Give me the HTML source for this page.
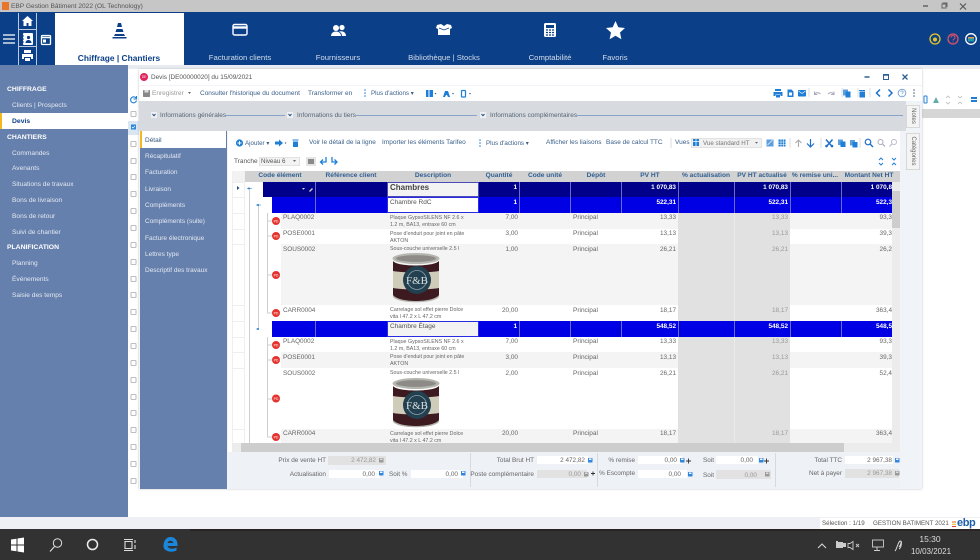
<!DOCTYPE html>
<html><head><meta charset="utf-8"><style>
html,body{margin:0;padding:0;width:980px;height:560px;overflow:hidden;background:#fff}
#w{position:absolute;left:0;top:0;width:980px;height:560px;overflow:hidden;filter:blur(.3px);font-family:"Liberation Sans",sans-serif;font-size:6.5px;color:#555}
.b{position:absolute}
.t{position:absolute;white-space:nowrap;line-height:8px;margin-top:1px}
.r{transform:translateX(-100%)}
.c{transform:translateX(-50%)}
.n{color:#d3dcea;font-size:7.7px;text-align:center;transform:translateX(-50%)}
.s{color:#e3e8f1;font-size:6.6px;left:12px}
.h{color:#fff;font-size:6.8px;font-weight:bold;left:7px}
.m{color:#e3e8f1;font-size:6.5px;left:145px}
.g{color:#2f5f93;font-weight:bold;font-size:6.6px;transform:translateX(-50%)}
.d{font-size:5.3px;line-height:6.6px;color:#666;left:390px}
.v{color:#666;transform:translateX(-100%);font-size:6.4px}
.q{color:#999;transform:translateX(-100%);font-size:6.4px}
.w{color:#fff;font-weight:bold;transform:translateX(-100%);font-size:6.4px}
.k{color:#666;left:283px;font-size:6.4px}
.i{background:#fff}.y{background:#e2e2e2}
</style></head><body><div id="w">
<div class="b" style="left:0;top:0;width:980px;height:12px;background:#c6c6c6"></div>
<div class="b" style="left:2px;top:2px;width:7px;height:8px;background:#e8752a"></div>
<div class="t" style="left:11px;top:2px;color:#555;font-size:6.6px">EBP Gestion Bâtiment 2022 (OL Technology)</div>
<div class="b" style="left:0;top:12px;width:980px;height:54px;background:#0b4088"></div>
<div class="b" style="left:55px;top:13px;width:129px;height:52px;background:#fff"></div>
<div class="b" style="left:18px;top:13px;width:1px;height:52px;background:#bccade"></div>
<div class="b" style="left:36px;top:13px;width:1px;height:52px;background:#bccade"></div>
<div class="b" style="left:19px;top:29px;width:17px;height:1px;background:#bccade"></div>
<div class="b" style="left:19px;top:46px;width:17px;height:1px;background:#bccade"></div>
<div class="t c" style="left:119px;top:53px;color:#0b4088;font-weight:bold;font-size:8.4px">Chiffrage | Chantiers</div>
<div class="t n" style="left:240px;top:53px">Facturation clients</div>
<div class="t n" style="left:338px;top:53px">Fournisseurs</div>
<div class="t n" style="left:444px;top:53px">Bibliothèque | Stocks</div>
<div class="t n" style="left:550px;top:53px">Comptabilité</div>
<div class="t n" style="left:615px;top:53px">Favoris</div>

<div class="b" style="left:0;top:65px;width:980px;height:4px;background:#e8ecf2"></div>
<div class="b" style="left:0;top:65px;width:128px;height:452px;background:#6680ad"></div>
<div class="b" style="left:0;top:113px;width:128px;height:16px;background:#fff"></div>
<div class="b" style="left:0;top:113px;width:2px;height:16px;background:#f5b71f"></div>
<div class="t h" style="top:85px">CHIFFRAGE</div>
<div class="t s" style="top:101px">Clients | Prospects</div>
<div class="t" style="left:12px;top:117px;color:#0b4088;font-weight:bold;font-size:6.8px">Devis</div>
<div class="t h" style="top:133px">CHANTIERS</div>
<div class="t s" style="top:149px">Commandes</div>
<div class="t s" style="top:164px">Avenants</div>
<div class="t s" style="top:180px">Situations de travaux</div>
<div class="t s" style="top:196px">Bons de livraison</div>
<div class="t s" style="top:212px">Bons de retour</div>
<div class="t s" style="top:228px">Suivi de chantier</div>
<div class="t h" style="top:243px">PLANIFICATION</div>
<div class="t s" style="top:259px">Planning</div>
<div class="t s" style="top:275px">Événements</div>
<div class="t s" style="top:291px">Saisie des temps</div>

<!-- background app -->
<div class="b" style="left:128px;top:94px;width:852px;height:13px;background:#fff"></div>
<div class="b" style="left:922px;top:109px;width:58px;height:9px;background:#d6d6d6"></div>
<div class="b" style="left:128px;top:121px;width:11px;height:14px;background:#dbe6f3"></div>

<!-- window -->
<div class="b" style="left:139px;top:69px;width:783px;height:420px;background:#f0f3f8;box-shadow:0 0 2px #bbb"></div>
<div class="b" style="left:139px;top:69px;width:783px;height:16px;background:#fff"></div>
<div class="b" style="left:139px;top:86px;width:783px;height:15px;background:#fff"></div>
<div class="b" style="left:139px;top:101px;width:767px;height:30px;background:#d7dade"></div>
<div class="t" style="left:151px;top:73px;color:#555;font-size:6.4px">Devis [DE00000020] du 15/09/2021</div>
<div class="t" style="left:152px;top:89px;color:#999">Enregistrer</div>
<div class="t" style="left:200px;top:89px;color:#3a5f8a">Consulter l'historique du document</div>
<div class="t" style="left:308px;top:89px;color:#3a5f8a">Transformer en</div>
<div class="t" style="left:371px;top:89px;color:#3a5f8a;font-size:6.2px">Plus d'actions ▾</div>
<div class="t" style="left:160px;top:111px;color:#567">Informations générales</div>
<div class="t" style="left:297px;top:111px;color:#567">Informations du tiers</div>
<div class="t" style="left:490px;top:111px;color:#567">Informations complémentaires</div>
<div class="b" style="left:225px;top:115px;width:60px;height:1px;background:#8aa4c8"></div>
<div class="b" style="left:356px;top:115px;width:121px;height:1px;background:#8aa4c8"></div>
<div class="b" style="left:575px;top:115px;width:328px;height:1px;background:#8aa4c8"></div>

<div class="b" style="left:140px;top:131px;width:87px;height:358px;background:#6680ad"></div>
<div class="b" style="left:140px;top:131px;width:86px;height:17px;background:#fff"></div>
<div class="b" style="left:140px;top:131px;width:2px;height:17px;background:#f5b71f"></div>
<div class="t" style="left:145px;top:136px;color:#35557f;font-size:6.5px">Détail</div>
<div class="t m" style="top:152px">Récapitulatif</div>
<div class="t m" style="top:168px">Facturation</div>
<div class="t m" style="top:185px">Livraison</div>
<div class="t m" style="top:201px">Compléments</div>
<div class="t m" style="top:217px">Compléments (suite)</div>
<div class="t m" style="top:234px">Facture électronique</div>
<div class="t m" style="top:250px">Lettres type</div>
<div class="t m" style="top:266px">Descriptif des travaux</div>

<div class="b" style="left:228px;top:131px;width:672px;height:321px;background:#fff"></div>
<div class="b" style="left:906px;top:105px;width:14px;height:23px;background:#f4f4f4;border:1px solid #d8d8d8;box-sizing:border-box"></div>
<div class="b" style="left:906px;top:133px;width:14px;height:37px;background:#f4f4f4;border:1px solid #d8d8d8;box-sizing:border-box"></div>
<div class="t" style="left:913px;top:115px;color:#666;font-size:6px;transform:translate(-50%,-50%) rotate(90deg)">Notes</div>
<div class="t" style="left:913px;top:150px;color:#666;font-size:6px;transform:translate(-50%,-50%) rotate(90deg)">Catégories</div>

<!-- grid toolbar -->
<div class="t" style="left:245px;top:139px;color:#3a5f8a;font-size:6.2px">Ajouter ▾</div>
<div class="t" style="left:309px;top:138px;color:#3a5f8a">Voir le détail de la ligne</div>
<div class="t" style="left:382px;top:138px;color:#3a5f8a">Importer les éléments Tarifeo</div>
<div class="t" style="left:486px;top:139px;color:#3a5f8a;font-size:6.2px">Plus d'actions ▾</div>
<div class="t" style="left:546px;top:138px;color:#3a5f8a">Afficher les liaisons</div>
<div class="t" style="left:606px;top:138px;color:#3a5f8a">Base de calcul TTC</div>
<div class="t" style="left:675px;top:138px;color:#3a5f8a">Vues</div>
<div class="b" style="left:691px;top:138px;width:71px;height:10px;background:#f1f1f1;border:1px solid #e2e2e2;box-sizing:border-box"></div>
<div class="t" style="left:703px;top:139px;color:#777;font-size:6.2px">Vue standard HT</div>
<div class="t" style="left:234px;top:157px;color:#555">Tranche</div>
<div class="b" style="left:259px;top:157px;width:41px;height:9px;background:#f3f3f3;border:1px solid #e2e2e2;box-sizing:border-box"></div>
<div class="t" style="left:261px;top:157px;color:#555;font-size:6.2px">Niveau 6</div>

<!-- grid header -->
<div class="b" style="left:232px;top:171px;width:12px;height:11px;background:#f2f2f2"></div>
<div class="b" style="left:244px;top:171px;width:656px;height:11px;background:#d2d2d2"></div>
<div class="t g" style="left:280px;top:171px">Code élément</div>
<div class="t g" style="left:351px;top:171px">Référence client</div>
<div class="t g" style="left:433px;top:171px">Description</div>
<div class="t g" style="left:499px;top:171px">Quantité</div>
<div class="t g" style="left:545px;top:171px">Code unité</div>
<div class="t g" style="left:596px;top:171px">Dépôt</div>
<div class="t g" style="left:650px;top:171px">PV HT</div>
<div class="t g" style="left:706px;top:171px">% actualisation</div>
<div class="t g" style="left:762px;top:171px">PV HT actualisé</div>
<div class="t g" style="left:815px;top:171px">% remise uni...</div>
<div class="t g" style="left:869px;top:171px">Montant Net HT</div>

<!-- stripes -->
<div class="b" style="left:281px;top:213px;width:611px;height:16px;background:#f4f4f4"></div>
<div class="b" style="left:281px;top:244px;width:611px;height:61px;background:#f4f4f4"></div>
<div class="b" style="left:281px;top:352px;width:611px;height:16px;background:#f4f4f4"></div>
<div class="b" style="left:281px;top:429px;width:611px;height:14px;background:#f4f4f4"></div>
<div class="b" style="left:678px;top:213px;width:112px;height:108px;background:#e1e1e1"></div>
<div class="b" style="left:678px;top:337px;width:112px;height:106px;background:#e1e1e1"></div>
<div class="b" style="left:734px;top:213px;width:1px;height:230px;background:#eaeaea"></div>
<!-- bands -->
<div class="b" style="left:263px;top:182px;width:629px;height:15px;background:#00008b"></div>
<div class="b" style="left:272px;top:197px;width:620px;height:16px;background:#0000e4"></div>
<div class="b" style="left:272px;top:321px;width:620px;height:16px;background:#0000e4"></div>
<!-- band column lines -->
<div class="b" style="left:315px;top:182px;width:1px;height:31px;background:#6a6ad0"></div>
<div class="b" style="left:519px;top:182px;width:1px;height:31px;background:#6a6ad0"></div>
<div class="b" style="left:570px;top:182px;width:1px;height:31px;background:#6a6ad0"></div>
<div class="b" style="left:621px;top:182px;width:1px;height:31px;background:#6a6ad0"></div>
<div class="b" style="left:678px;top:182px;width:1px;height:31px;background:#6a6ad0"></div>
<div class="b" style="left:734px;top:182px;width:1px;height:31px;background:#6a6ad0"></div>
<div class="b" style="left:790px;top:182px;width:1px;height:31px;background:#6a6ad0"></div>
<div class="b" style="left:841px;top:182px;width:1px;height:31px;background:#6a6ad0"></div>
<div class="b" style="left:315px;top:321px;width:1px;height:16px;background:#6a6ad0"></div>
<div class="b" style="left:519px;top:321px;width:1px;height:16px;background:#6a6ad0"></div>
<div class="b" style="left:570px;top:321px;width:1px;height:16px;background:#6a6ad0"></div>
<div class="b" style="left:621px;top:321px;width:1px;height:16px;background:#6a6ad0"></div>
<div class="b" style="left:678px;top:321px;width:1px;height:16px;background:#6a6ad0"></div>
<div class="b" style="left:734px;top:321px;width:1px;height:16px;background:#6a6ad0"></div>
<div class="b" style="left:790px;top:321px;width:1px;height:16px;background:#6a6ad0"></div>
<div class="b" style="left:841px;top:321px;width:1px;height:16px;background:#6a6ad0"></div>
<!-- description cells -->
<div class="b" style="left:387px;top:182px;width:92px;height:15px;background:#f3f3f3;border:1px solid #4a4ab8;box-sizing:border-box"></div>
<div class="b" style="left:387px;top:197px;width:92px;height:16px;background:#fff;border:1px solid #2a2ae0;box-sizing:border-box"></div>
<div class="b" style="left:387px;top:321px;width:92px;height:16px;background:#f3f3f3;border:1px solid #2a2ae0;box-sizing:border-box"></div>
<div class="t" style="left:390px;top:183px;color:#444;font-weight:bold;font-size:8px">Chambres</div>
<div class="t" style="left:390px;top:198px;color:#555;font-size:6.5px">Chambre RdC</div>
<div class="t" style="left:390px;top:322px;color:#555;font-size:6.5px">Chambre Étage</div>
<!-- band values -->
<div class="t w" style="left:517px;top:183px">1</div><div class="t w" style="left:676px;top:183px">1 070,83</div><div class="t w" style="left:788px;top:183px">1 070,83</div><div class="t w" style="left:892px;top:183px">1 070,8</div>
<div class="t w" style="left:517px;top:198px">1</div><div class="t w" style="left:676px;top:198px">522,31</div><div class="t w" style="left:788px;top:198px">522,31</div><div class="t w" style="left:892px;top:198px">522,3</div>
<div class="t w" style="left:517px;top:322px">1</div><div class="t w" style="left:676px;top:322px">548,52</div><div class="t w" style="left:788px;top:322px">548,52</div><div class="t w" style="left:892px;top:322px">548,5</div>

<!-- rows -->
<div class="t k" style="top:213px">PLAQ0002</div><div class="t d" style="top:214px">Plaque GypsoSILENS NF 2.6 x<br>1.2 m, BA13, entraxe 60 cm</div><div class="t v" style="left:518px;top:213px">7,00</div><div class="t" style="left:573px;top:213px;color:#666">Principal</div><div class="t v" style="left:676px;top:213px">13,33</div><div class="t q" style="left:788px;top:213px">13,33</div><div class="t v" style="left:892px;top:213px">93,3</div>
<div class="t k" style="top:229px">POSE0001</div><div class="t d" style="top:230px">Pose d'enduit pour joint en pâte<br>AKTON</div><div class="t v" style="left:518px;top:229px">3,00</div><div class="t" style="left:573px;top:229px;color:#666">Principal</div><div class="t v" style="left:676px;top:229px">13,13</div><div class="t q" style="left:788px;top:229px">13,13</div><div class="t v" style="left:892px;top:229px">39,3</div>
<div class="t k" style="top:245px">SOUS0002</div><div class="t d" style="top:245px">Sous-couche universelle 2.5 l</div><div class="t v" style="left:518px;top:245px">1,00</div><div class="t" style="left:573px;top:245px;color:#666">Principal</div><div class="t v" style="left:676px;top:245px">26,21</div><div class="t q" style="left:788px;top:245px">26,21</div><div class="t v" style="left:892px;top:245px">26,2</div>
<div class="t k" style="top:306px">CARR0004</div><div class="t d" style="top:306px">Carrelage sol effet pierre Dolce<br>vita l 47.2 x L 47.2 cm</div><div class="t v" style="left:518px;top:306px">20,00</div><div class="t" style="left:573px;top:306px;color:#666">Principal</div><div class="t v" style="left:676px;top:306px">18,17</div><div class="t q" style="left:788px;top:306px">18,17</div><div class="t v" style="left:892px;top:306px">363,4</div>
<div class="t k" style="top:337px">PLAQ0002</div><div class="t d" style="top:338px">Plaque GypsoSILENS NF 2.6 x<br>1.2 m, BA13, entraxe 60 cm</div><div class="t v" style="left:518px;top:337px">7,00</div><div class="t" style="left:573px;top:337px;color:#666">Principal</div><div class="t v" style="left:676px;top:337px">13,33</div><div class="t q" style="left:788px;top:337px">13,33</div><div class="t v" style="left:892px;top:337px">93,3</div>
<div class="t k" style="top:353px">POSE0001</div><div class="t d" style="top:353px">Pose d'enduit pour joint en pâte<br>AKTON</div><div class="t v" style="left:518px;top:353px">3,00</div><div class="t" style="left:573px;top:353px;color:#666">Principal</div><div class="t v" style="left:676px;top:353px">13,13</div><div class="t q" style="left:788px;top:353px">13,13</div><div class="t v" style="left:892px;top:353px">39,3</div>
<div class="t k" style="top:369px">SOUS0002</div><div class="t d" style="top:369px">Sous-couche universelle 2.5 l</div><div class="t v" style="left:518px;top:369px">2,00</div><div class="t" style="left:573px;top:369px;color:#666">Principal</div><div class="t v" style="left:676px;top:369px">26,21</div><div class="t q" style="left:788px;top:369px">26,21</div><div class="t v" style="left:892px;top:369px">52,4</div>
<div class="t k" style="top:429px">CARR0004</div><div class="t d" style="top:430px">Carrelage sol effet pierre Dolce<br>vita l 47.2 x L 47.2 cm</div><div class="t v" style="left:518px;top:429px">20,00</div><div class="t" style="left:573px;top:429px;color:#666">Principal</div><div class="t v" style="left:676px;top:429px">18,17</div><div class="t q" style="left:788px;top:429px">18,17</div><div class="t v" style="left:892px;top:429px">363,4</div>

<!-- scrollbars -->
<div class="b" style="left:892px;top:182px;width:8px;height:261px;background:#ececec"></div>
<div class="b" style="left:892px;top:191px;width:8px;height:37px;background:#cdcdcd"></div>
<div class="b" style="left:232px;top:443px;width:668px;height:9px;background:#ececec"></div>
<div class="b" style="left:241px;top:443px;width:603px;height:9px;background:#cdcdcd"></div>

<!-- footer -->
<div class="b" style="left:228px;top:452px;width:672px;height:37px;background:#eef1f6"></div>
<div class="b" style="left:470px;top:453px;width:1px;height:34px;background:#d6d9de"></div>
<div class="b" style="left:597px;top:453px;width:1px;height:34px;background:#d6d9de"></div>
<div class="b" style="left:775px;top:453px;width:1px;height:34px;background:#d6d9de"></div>
<div class="b y" style="left:328px;top:456px;width:58px;height:9px"></div>
<div class="b i" style="left:329px;top:470px;width:51px;height:8px"></div>
<div class="b i" style="left:411px;top:470px;width:52px;height:8px"></div>
<div class="b i" style="left:537px;top:456px;width:51px;height:8px"></div>
<div class="b y" style="left:537px;top:470px;width:50px;height:8px"></div>
<div class="b i" style="left:638px;top:456px;width:44px;height:8px"></div>
<div class="b i" style="left:638px;top:470px;width:49px;height:8px"></div>
<div class="b i" style="left:716px;top:456px;width:42px;height:8px"></div>
<div class="b y" style="left:716px;top:470px;width:55px;height:9px"></div>
<div class="b i" style="left:845px;top:456px;width:48px;height:8px"></div>
<div class="b y" style="left:845px;top:469px;width:54px;height:9px"></div>
<div class="t v" style="left:326px;top:456px">Prix de vente HT</div>
<div class="t v" style="left:326px;top:470px">Actualisation</div>
<div class="t" style="left:389px;top:470px;color:#666;font-size:6.4px">Soit %</div>
<div class="t v" style="left:534px;top:456px">Total Brut HT</div>
<div class="t v" style="left:534px;top:470px">Poste complémentaire</div>
<div class="t v" style="left:635px;top:456px">% remise</div>
<div class="t v" style="left:635px;top:469px">% Escompte</div>
<div class="t" style="left:703px;top:456px;color:#666;font-size:6.4px">Soit</div>
<div class="t" style="left:703px;top:471px;color:#666;font-size:6.4px">Soit</div>
<div class="t v" style="left:842px;top:456px">Total TTC</div>
<div class="t v" style="left:842px;top:469px">Net à payer</div>
<div class="t q" style="left:376px;top:456px">2 472,82</div>
<div class="t v" style="left:375px;top:470px">0,00</div>
<div class="t v" style="left:458px;top:470px">0,00</div>
<div class="t v" style="left:585px;top:456px">2 472,82</div>
<div class="t q" style="left:581px;top:470px">0,00</div>
<div class="t v" style="left:677px;top:456px">0,00</div>
<div class="t v" style="left:681px;top:470px">0,00</div>
<div class="t v" style="left:753px;top:456px">0,00</div>
<div class="t q" style="left:757px;top:471px">0,00</div>
<div class="t v" style="left:892px;top:456px">2 967,38</div>
<div class="t q" style="left:892px;top:469px">2 967,38</div>

<!-- bottom -->
<div class="b" style="left:128px;top:517px;width:852px;height:1px;background:#dcdfe4"></div>
<div class="b" style="left:0;top:517px;width:980px;height:12px;background:#eef0f5"></div>
<div class="b" style="left:820px;top:518px;width:160px;height:11px;background:#fff"></div>
<div class="t" style="left:822px;top:519px;color:#555;font-size:6.2px">Sélection : 1/19</div>
<div class="t" style="left:873px;top:519px;color:#555;font-size:6.2px">GESTION BATIMENT 2021</div>
<div class="t" style="left:957px;top:518px;color:#1d5fa8;font-weight:bold;font-size:11px;letter-spacing:-.4px">ebp</div>
<div class="b" style="left:0;top:529px;width:980px;height:31px;background:#333232"></div>
<div class="b" style="left:190px;top:529px;width:790px;height:2px;background:#2a2522"></div>
<div class="t c" style="left:930px;top:533px;color:#ddd;font-size:8.5px;line-height:10px">15:30</div>
<div class="t c" style="left:931px;top:546px;color:#ddd;font-size:8px;line-height:10px">10/03/2021</div>

<svg class="b" style="left:0;top:0" width="980" height="560" viewBox="0 0 980 560" fill="none">
<!-- title controls -->
<path d="M923 6h5" stroke="#555" stroke-width="1.3"/><path d="M942 4h4v4h-4zM943 4v-1h4v4" stroke="#666"/><path d="M960 3.500l6 6M966 3.500l-6 6" stroke="#555" stroke-width="1.1"/>
<!-- hamburger & left buttons -->
<path d="M3 35h12M3 39h12M3 43h12" stroke="#fff" stroke-width="1.3"/>
<path d="M27.500 16l-5.500 5h1.500v5h3v-3h2v3h3v-5h1.500z" fill="#fff"/>
<rect x="23" y="33" width="10" height="12" rx="1" fill="#fff"/><path d="M23 36h1M23 39h1M23 42h1" stroke="#0b4088"/><circle cx="28.500" cy="37.500" r="1.600" fill="#0b4088"/><path d="M25.500 43c0-4 6-4 6 0z" fill="#0b4088"/>
<rect x="41.500" y="35.500" width="9" height="9" rx="1" stroke="#fff" stroke-width="1.300"/><path d="M41 37.500h10" stroke="#fff" stroke-width="1.500"/><rect x="43" y="39.500" width="3" height="3" fill="#fff"/>
<path d="M24 50h7v3h-7z" fill="#fff"/><path d="M22 54h11v5h-2v-2h-7v2h-2z" fill="#fff"/><path d="M25 58h5v3h-5z" fill="#fff"/>
<!-- cone -->
<path d="M118 23h3l1 4h-5zM116.500 29h6l1 3h-8zM115 34h9l1 2h-11zM112.500 37h14v1.500h-14z" fill="#0b4088"/>
<!-- card -->
<rect x="233" y="24.500" width="14" height="10.500" rx="1.500" stroke="#fff" stroke-width="1.400"/><path d="M233 27.500h14" stroke="#fff" stroke-width="2.400"/>
<!-- people -->
<circle cx="336" cy="28" r="3" fill="#fff"/><circle cx="342" cy="27.500" r="2.600" fill="#fff"/><path d="M331 36c0-6 10-6 10 0z" fill="#fff"/><path d="M339 31.500c4-1 7 1 7 4.500h-4c0-2-1-3.500-3-4.500z" fill="#fff"/>
<!-- box -->
<path d="M437 25l4-1 3 2 3-2 4 1 1 3-2 1v6h-12v-6l-2-1z" fill="#fff"/><path d="M439 28l5 2 5-2" stroke="#0b4088" stroke-width=".8"/>
<!-- calc -->
<rect x="544" y="23" width="12" height="14" rx="1.500" fill="#fff"/><rect x="546" y="25" width="8" height="3" fill="#0b4088"/><path d="M546 30h2M549 30h2M552 30h2M546 32.500h2M549 32.500h2M552 32.500h2M546 35h2M549 35h2M552 35h2" stroke="#0b4088" stroke-width="1.200"/>
<!-- star -->
<path d="M615.500 21l2.800 6.300 6.700.7-5 4.500 1.400 6.800-5.900-3.500-5.900 3.500 1.400-6.800-5-4.500 6.700-.7z" fill="#fff"/>
<!-- top-right circles -->
<circle cx="935" cy="39" r="5" stroke="#e8c428" stroke-width="1.300"/><circle cx="935" cy="39.500" r="2" fill="#e8c428"/>
<circle cx="953" cy="39" r="5" stroke="#e0506a" stroke-width="1.300"/><path d="M951 37.500c0-2.500 4-2.500 4 0 0 1.500-2 1.500-2 3M953 41.800v.8" stroke="#e0506a"/>
<circle cx="971" cy="39" r="5.300" stroke="#fff" stroke-width="1.300"/><path d="M968 37h6v1.500h-6z" fill="#d95"/><path d="M968 38.500h6v3h-6z" fill="#29a"/>
<!-- window header -->
<circle cx="144" cy="77" r="4" fill="#e0245e"/>
<text x="144" y="78.200" fill="#fff" font-family="Liberation Sans" font-size="3.200" text-anchor="middle">DE</text>
<path d="M864.500 77h5" stroke="#2f5f93" stroke-width="1.500"/><rect x="883.500" y="74.500" width="5" height="5" stroke="#2f5f93" stroke-width="1"/><path d="M883.500 75h5" stroke="#2f5f93" stroke-width="1.500"/><path d="M902.500 74.500l5 5M907.500 74.500l-5 5" stroke="#2f5f93" stroke-width="1.300"/>
<!-- save -->
<rect x="143" y="90" width="7" height="7" rx=".8" fill="#888"/><rect x="144.500" y="90" width="4" height="2.500" fill="#ddd"/>
<path d="M188 92h3l-1.500 2z" fill="#667"/>
<path d="M365 90v.01M365 93v.01M365 96v.01" stroke="#2a82d8" stroke-width="1.600" stroke-linecap="round"/>
<path d="M426 90h7v7h-7z" fill="#1f7fd6"/><path d="M429 90v7" stroke="#fff"/><path d="M434.500 93h2l-1 1.500z" fill="#357"/>
<path d="M443 97l2-6h3l2 6h-2l-1-2h-1l-1 2z" fill="#1f7fd6"/><path d="M452 93h2l-1 1.500z" fill="#357"/>
<rect x="461.500" y="90.500" width="4" height="6.500" rx=".8" stroke="#1f7fd6" stroke-width="1.200"/><path d="M469 93h2l-1 1.500z" fill="#357"/>
<!-- window right toolbar -->
<path d="M775 91h6v-2h-6z" fill="#1f7fd6"/><path d="M773.500 92h9v4h-2v-1.500h-5v1.500h-2z" fill="#1f7fd6"/><path d="M776 95h4v2.500h-4z" fill="#1f7fd6"/>
<path d="M787.500 89.500h4l2 2v5.500h-6z" fill="#1f7fd6"/><rect x="789" y="92.500" width="3" height="3" fill="#fff"/>
<rect x="798" y="90" width="8" height="6.500" rx=".6" fill="#1f7fd6"/><path d="M798.500 91l3.500 2.500 3.500-2.500" stroke="#fff" stroke-width=".7"/>
<path d="M814.500 95c1-3 4-3 6-1M814.500 91.500v3h3" stroke="#aab" stroke-width="1"/><path d="M834 95c-1-3-4-3-6-1M834 91.500v3h-3" stroke="#aab" stroke-width="1"/>
<path d="M809 88v9M842 88v9M858 88v9M870 88v9" stroke="#ddd"/>
<rect x="843" y="89.500" width="5" height="6" fill="#5c9fdf"/><rect x="845.500" y="91.500" width="5" height="6" fill="#1f7fd6"/>
<path d="M859 90h6v1h-6z" fill="#1f7fd6"/><path d="M859.500 91.500h5.500v6h-5.500z" fill="#1f7fd6"/>
<path d="M880 89.500l-3.500 3.500 3.500 3.500M888.500 89.500l3.500 3.500-3.500 3.500" stroke="#1f70c8" stroke-width="1.500"/>
<circle cx="902" cy="93" r="3.800" stroke="#7aa5d0"/><path d="M900.800 92c0-1.500 2.400-1.500 2.400 0 0 1-1.200 1-1.200 2M902 95v.5" stroke="#7aa5d0" stroke-width=".8"/>
<path d="M914 90v.01M914 93v.01M914 96v.01" stroke="#456" stroke-width="1.500" stroke-linecap="round"/>
<!-- behind window -->
<path d="M136 98a3 3 0 1 0 .5 2.500M136.500 96v3h-3" stroke="#1f7fd6" stroke-width="1.100"/>
<rect x="924" y="96" width="3" height="7" rx=".6" stroke="#1f7fd6"/><path d="M933 103l3-6 3 6z" fill="#6aa"/><path d="M946 98l2-2 2 2M946 102l2 2 2-2M958 96l2 2 2-2M958 104l2-2 2 2" stroke="#bbb" stroke-width=".8"/><path d="M971 97h6v2h-6zM971 100h6v2h-6z" fill="#1f7fd6"/>
<!-- section chevrons -->
<rect x="151" y="112" width="6" height="6" fill="#eef0f3"/><path d="M152.500 114l1.500 1.700 1.500-1.700" stroke="#26507f" stroke-width="1"/>
<rect x="287" y="112" width="6" height="6" fill="#eef0f3"/><path d="M288.500 114l1.500 1.700 1.500-1.700" stroke="#26507f" stroke-width="1"/>
<rect x="480" y="112" width="6" height="6" fill="#eef0f3"/><path d="M481.500 114l1.500 1.700 1.500-1.700" stroke="#26507f" stroke-width="1"/>
<!-- grid toolbar icons -->
<circle cx="239.500" cy="143" r="3.600" fill="#1f7fd6"/><path d="M237.500 143h4M239.500 141v4" stroke="#fff" stroke-width=".9"/>
<path d="M275 141.500h4v-2l4 3.500-4 3.500v-2h-4z" fill="#1f7fd6"/><path d="M284.500 142.500h2l-1 1.500z" fill="#357"/>
<path d="M292.500 139.500h6v1h-6z" fill="#1f7fd6"/><path d="M293 141.500h5v5.500h-5z" fill="#1f7fd6"/>
<path d="M480 140v.01M480 143v.01M480 146v.01" stroke="#2a82d8" stroke-width="1.600" stroke-linecap="round"/>
<path d="M671 138v10M790 138v10M821 138v10M860 138v10" stroke="#ddd"/>
<rect x="693" y="139" width="6" height="7" fill="#1f7fd6"/><path d="M693 141.500h6M696 139v7" stroke="#fff" stroke-width=".7"/><path d="M755 142h3l-1.500 1.800z" fill="#667"/>
<rect x="766.500" y="139.500" width="7" height="7" fill="#5c9fdf"/><rect x="778.500" y="139.500" width="7" height="7" fill="#1f7fd6"/><path d="M778.500 142h7M778.500 144.500h7M781 139.500v7M783.500 139.500v7" stroke="#fff" stroke-width=".6"/><path d="M767.500 145l5-5" stroke="#fff" stroke-width=".6"/>
<path d="M798.500 147v-7M795.500 143l3-3 3 3" stroke="#aaa" stroke-width="1.100"/><path d="M810.500 139v7.500M807 143.500l3.500 3.500 3.500-3.500" stroke="#1f70c8" stroke-width="1.200"/>
<path d="M826 139.500l6.500 7.500M832.500 139.500l-6.500 7.500" stroke="#1f70c8" stroke-width="1.500"/><circle cx="826.500" cy="146" r="1.300" fill="#1f70c8"/><circle cx="832" cy="146" r="1.300" fill="#1f70c8"/>
<rect x="838" y="139.500" width="5" height="5.500" fill="#5c9fdf"/><rect x="840.500" y="141.500" width="5" height="5.500" fill="#1f7fd6"/>
<rect x="850" y="140" width="5" height="5.500" fill="#5c9fdf"/><rect x="852.500" y="142" width="5" height="5.500" fill="#1f7fd6"/>
<circle cx="868" cy="142" r="2.800" stroke="#1f70c8" stroke-width="1.200"/><path d="M870 144l3 3" stroke="#1f70c8" stroke-width="1.400"/>
<circle cx="880.500" cy="142" r="2.500" stroke="#aab" stroke-width="1"/><path d="M882.500 144l2.500 2.500" stroke="#aab" stroke-width="1.200"/>
<circle cx="894" cy="142" r="2.500" stroke="#bbc" stroke-width="1"/><path d="M892 144l-2.500 2.500" stroke="#bbc" stroke-width="1.200"/>
<!-- tranche -->
<path d="M293 160h3l-1.500 2z" fill="#667"/>
<rect x="306" y="157" width="10" height="9" fill="#e4e4e4"/><rect x="308" y="159" width="6" height="5" fill="#8a8a8a"/>
<path d="M326 157v5h-5M323 159.500l-2.500 2.500 2.500 2.500" stroke="#1f7fd6" stroke-width="1.300"/><path d="M332 157v5h5M334.500 159.500l2.500 2.500-2.500 2.500" stroke="#1f7fd6" stroke-width="1.300"/>
<path d="M879 160l2-2 2 2M879 163l2 2 2-2M892 158l2 2 2-2M892 165l2-2 2 2" stroke="#1f7fd6" stroke-width="1"/>
<!-- tree & row gutter -->
<path d="M232 197.500h12M232 213.500h12M232 229.500h12M232 244.500h12M232 305.500h12M232 321.500h12M232 337.500h12M232 352.500h12M232 368.500h12M232 429.500h12M232 182.500h12M244.500 171v272M232.500 171v272" stroke="#efefef"/>
<path d="M237 186l2.500 2-2.500 2z" fill="#26507f"/>
<path d="M249.500 190v253M258.500 205v124M267.500 213v100h6M267.500 337v100h6M267.500 221h6M267.500 236h6M267.500 275h6M267.500 345h6M267.500 360h6M267.500 399h6" stroke="#cfcfcf"/>
<path d="M247 188.500h5M256 205h5M256 329h3" stroke="#8fb4dc"/>
<circle cx="249" cy="188.500" r="1" fill="#1f7fd6"/><circle cx="258" cy="205" r="1" fill="#1f7fd6"/><circle cx="258" cy="329" r="1" fill="#1f7fd6"/>
<g fill="#e5322d">
<circle cx="276" cy="221" r="4"/><circle cx="276" cy="236" r="4"/><circle cx="276" cy="275" r="4"/><circle cx="276" cy="313" r="4"/><circle cx="276" cy="345" r="4"/><circle cx="276" cy="360" r="4"/><circle cx="276" cy="398.500" r="4"/><circle cx="276" cy="437" r="4"/></g>
<g fill="#fff" font-family="Liberation Sans" font-size="3.500" text-anchor="middle">
<text x="276" y="222.300">PD</text><text x="276" y="237.300">PD</text><text x="276" y="276.300">PD</text><text x="276" y="314.300">PD</text><text x="276" y="346.300">PD</text><text x="276" y="361.300">PD</text><text x="276" y="399.800">PD</text><text x="276" y="438.300">PD</text></g>
<path d="M302 188h3l-1.500 1.800z" fill="#ddd"/><path d="M309 191l3-3 1 1-3 3z" fill="#ccc"/>
<!-- cans -->
<defs><g id="can">
<path d="M1 8c4 6 41 6 46 0v35c-4 8-42 8-46 0z" fill="#3c1a20"/>
<ellipse cx="24" cy="5.500" rx="23.500" ry="5.500" fill="#b6b6b0"/><ellipse cx="24" cy="5.500" rx="20" ry="3.400" fill="#8d8a88"/>
<path d="M1 18c10 2 36 2 46 0v17c-10 2-36 2-46 0z" fill="#cfccba"/>
<path d="M1 42c6 8 40 8 46 0v2c-6 7-40 7-46 0z" fill="#b4b4ae"/>
<circle cx="25" cy="27" r="14" fill="#22404f"/><circle cx="25" cy="27" r="9.500" stroke="#8aa0a8" stroke-width=".8"/>
<text x="25" y="31" fill="#d8dfe0" font-family="Liberation Serif" font-size="11" text-anchor="middle">F&amp;B</text>
</g>
<g id="cb"><rect x="-2.500" y="-2.500" width="5" height="5" rx=".5" fill="#fff" stroke="#aaa" stroke-width=".8"/></g>
<g id="ib"><rect width="4.500" height="4.500" rx=".5" fill="#2f86e0"/><rect x="1" y=".5" width="2.500" height="1.500" fill="#fff"/></g>
<g id="ig"><rect width="4.500" height="4.500" rx=".5" fill="#9a9a9a"/><rect x="1" y=".5" width="2.500" height="1.500" fill="#ddd"/></g>
</defs>
<use href="#can" x="392" y="253"/><use href="#can" x="392" y="378"/>
<!-- checkboxes -->
<use href="#cb" x="133.500" y="114"/><rect x="131" y="124.500" width="5" height="5" fill="#2a86d8"/><path d="M132 127l1 1 2-2" stroke="#fff" stroke-width=".7"/>
<use href="#cb" x="133.500" y="144"/><use href="#cb" x="133.500" y="161"/><use href="#cb" x="133.500" y="177"/><use href="#cb" x="133.500" y="194"/><use href="#cb" x="133.500" y="211"/><use href="#cb" x="133.500" y="228"/><use href="#cb" x="133.500" y="245"/><use href="#cb" x="133.500" y="262"/><use href="#cb" x="133.500" y="279"/><use href="#cb" x="133.500" y="295"/><use href="#cb" x="133.500" y="312"/><use href="#cb" x="133.500" y="329"/><use href="#cb" x="133.500" y="346"/><use href="#cb" x="133.500" y="363"/><use href="#cb" x="133.500" y="380"/><use href="#cb" x="133.500" y="397"/><use href="#cb" x="133.500" y="413"/><use href="#cb" x="133.500" y="430"/><use href="#cb" x="133.500" y="447"/><use href="#cb" x="133.500" y="464"/><use href="#cb" x="133.500" y="481"/>
<!-- footer icons -->
<use href="#ig" x="379" y="458"/><use href="#ib" x="379" y="471"/><use href="#ib" x="461" y="471"/><use href="#ib" x="588" y="458"/><use href="#ig" x="584" y="472"/><use href="#ib" x="680" y="458"/><use href="#ib" x="688" y="472"/><use href="#ib" x="759" y="458"/><use href="#ig" x="765" y="472"/><use href="#ib" x="895" y="458"/><use href="#ig" x="895" y="471"/>
<path d="M686 461h5M688.500 458.500v5M764 461h5M766.500 458.500v5M591 473.500h4M593 471.500v4" stroke="#333" stroke-width=".9"/>
<!-- ebp bars -->
<path d="M952 522h4" stroke="#e8752a" stroke-width="1.100"/><path d="M952 524.300h4" stroke="#e8c428" stroke-width="1.100"/><path d="M952 526.500h4" stroke="#e04040" stroke-width="1.100"/>
<!-- taskbar -->
<path d="M11 539.500l5.500-.8v5.800h-5.500zM17.500 538.500l6.500-1v7h-6.500zM11 545.500h5.500v5.800l-5.500-.8zM17.500 545.500h6.500v7l-6.500-1z" fill="#fff"/>
<circle cx="57.500" cy="543" r="4.200" stroke="#ddd" stroke-width="1"/><path d="M54.500 546.500l-4.500 5" stroke="#ddd" stroke-width="1.100"/>
<circle cx="92.500" cy="544.500" r="5" stroke="#eee" stroke-width="1.500"/>
<path d="M125 541.500h7v7h-7zM124 539.500h9M124 550.500h9M135 540v3M135 545v4" stroke="#ddd" stroke-width="1.100"/>
<path d="M163.500 546c0-6 3.500-9 7-9 4 0 7 3 7 7.500v1.500h-10c.5 3 6 3.500 9 1.500v3c-5 2.500-13 1-13-4.500zM167.500 543h6c-.5-3-5.500-3-6 0z" fill="#1a86dc"/>
<path d="M818 548l4-4 4 4" stroke="#ddd" stroke-width="1"/>
<path d="M836 541h2v1h5v6h-7zM842 543h4v4h-4z" fill="#ccc"/><path d="M853 541.500l-3 2h-2v4h2l3 2zM856 544l3 3M859 544l-3 3" stroke="#ccc" stroke-width=".9"/>
<rect x="872.500" y="540" width="11" height="7" stroke="#ccc" stroke-width=".9"/><path d="M877 547v3M874 550.500h6" stroke="#ccc"/>
<path d="M895 551c2-2 3-9 5-10 2 0 1 4-1 6M899 549c2-1 3-6 2-8" stroke="#ddd" stroke-width="1"/>
</svg>
</div></body></html>
